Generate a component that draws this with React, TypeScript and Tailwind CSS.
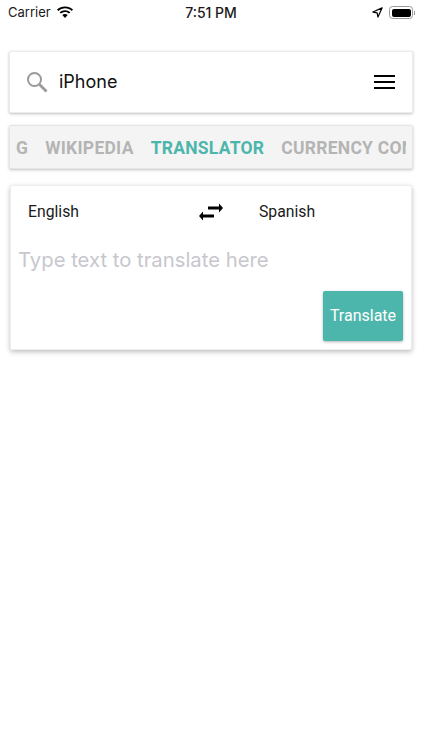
const tabs = [
  { label: "WIKIPEDIA", active: false },
  { label: "TRANSLATOR", active: true },
  { label: "CURRENCY CONVERTER", active: false }
]

export default function App() {
  return (
    <div className="h-[750px] w-[422px] overflow-hidden bg-white font-['Inter',sans-serif] text-black">
      <StatusBar />

      <div className="mx-[9px] mt-[27px] flex h-[62px] items-center rounded-[2px] border border-[#ececec] bg-white pl-[16px] pr-[17px] shadow-[0_1px_3px_rgba(0,0,0,0.25)]">
        <svg viewBox="0 0 22 22" className="h-[22px] w-[22px]" fill="none" stroke="#9a9a9a">
          <circle cx="8.500" cy="8.500" r="6.500" strokeWidth="2" />
          <path d="M13.500 13.500 20.500 20.500" strokeWidth="2.800" />
        </svg>
        <span className="ml-[11px] text-[18px] leading-none text-[#111]">iPhone</span>
        <svg viewBox="0 0 21 14" className="ml-auto h-[14px] w-[21px]" fill="black">
          <rect x="0" y="0" width="21" height="2" />
          <rect x="0" y="6" width="21" height="2" />
          <rect x="0" y="12" width="21" height="2" />
        </svg>
      </div>

      <div className="mx-[9px] mt-[12px] flex h-[44px] items-center overflow-hidden rounded-[2px] border border-[#e6e6e6] bg-[#f4f4f4] pl-[6px] pr-[6px] pt-[3px] shadow-[0_1px_3px_rgba(0,0,0,0.25)]">
        <div className="flex h-full w-full items-center overflow-hidden whitespace-nowrap font-['Roboto',sans-serif] text-[17.500px] font-bold tracking-[0.25px]">
          <span className="text-[#b4b4b4]">G</span>
          {tabs.map((tab) => (
            <span key={tab.label} className={tab.active ? "ml-[17px] text-[#4db6ac]" : "ml-[17px] text-[#b4b4b4]"}>
              {tab.label}
            </span>
          ))}
        </div>
      </div>

      <div className="mx-[10px] mt-[16px] h-[165px] rounded-[2px] border border-[#eeeeee] bg-white pl-[8px] pr-[8px] shadow-[0_2px_5px_rgba(0,0,0,0.25)]">
        <div className="flex h-[50px] items-center pt-[1px] font-['Roboto',sans-serif] text-[15.750px] text-[#1a1a1a]">
          <span className="ml-[9px] w-[170px]">English</span>
          <svg viewBox="0 0 26 20" className="h-[20px] w-[26px]" fill="black">
            <path d="M10 4.600h11V1.500l4 4.500-4 4.500V7.400H10z" />
            <path d="M16 12.600H5V9.500l-4 4.500 4 4.500v-3.100h11z" />
          </svg>
          <span className="ml-[35px]">Spanish</span>
        </div>
        <div className="-ml-[1px] mt-[8px] text-[20.300px] leading-[32px] text-[#c7c7cd]">Type text to translate here</div>
        <div className="mt-[15px] flex justify-end">
          <button className="h-[50px] w-[80px] rounded-[2px] bg-[#4db6ac] font-['Roboto',sans-serif] text-[16px] text-white shadow-[0_1px_3px_rgba(0,0,0,0.3)]">
            Translate
          </button>
        </div>
      </div>
    </div>
  )
}

function StatusBar() {
  return (
    <div className="relative flex h-[24px] items-center pl-[8px] pr-[7px] pt-[1px] text-[13px] text-[#1a1a1a]">
      <span>Carrier</span>
      <svg viewBox="0 0 18 13" className="ml-[5px] h-[13px] w-[18px]" fill="black">
        <path d="M9 2.200c2.600 0 5 1 6.800 2.700l1.200-1.300A11.600 11.600 0 0 0 9 .4 11.600 11.600 0 0 0 1 3.600l1.200 1.300A9.800 9.800 0 0 1 9 2.200z" />
        <path d="M9 6c1.600 0 3 .6 4.100 1.600l1.300-1.300A7.900 7.900 0 0 0 9 4.200a7.900 7.900 0 0 0-5.400 2.100l1.300 1.300A6 6 0 0 1 9 6z" />
        <path d="M9 8c-1.100 0-2 .4-2.700 1L9 12l2.700-3c-.7-.6-1.600-1-2.700-1z" />
      </svg>
      <span className="absolute left-0 right-0 text-center text-[14px] font-medium">7:51 PM</span>
      <svg viewBox="0 0 12 12" className="ml-auto h-[11px] w-[11px]" fill="none" stroke="black" strokeWidth="1.300">
        <path d="M11 1 1 5.500l4.600.9.900 4.600z" strokeLinejoin="round" />
      </svg>
      <div className="ml-[6px] flex items-center">
        <div className="h-[13px] w-[24px] rounded-[3.500px] border border-[#999] p-[1.500px]">
          <div className="h-full w-full rounded-[2px] bg-black" />
        </div>
        <div className="ml-[1px] h-[4px] w-[1px] bg-[#999]" />
      </div>
    </div>
  )
}
